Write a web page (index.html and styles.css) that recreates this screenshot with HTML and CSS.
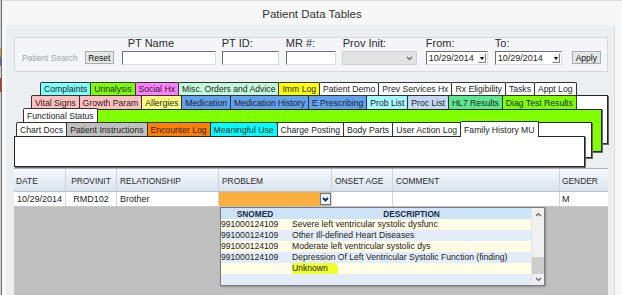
FILE: index.html
```html
<!DOCTYPE html>
<html lang="en">
<head>
    <meta charset="UTF-8">
    <title>Patient Data Tables</title>
    <link rel="stylesheet" href="styles.css">
</head>
<body>
    <div class="desk"></div>

    <div class="janela">
        <div class="titulo">Patient Data Tables</div>

        <div class="painel">
            <!-- barra de busca -->
            <div class="busca">
                <span class="busca-rotulo">Patient Search</span>
                <button class="botao b-reset">Reset</button>
                <div class="campo c-nome"><label>PT Name</label><input type="text"></div>
                <div class="campo c-id"><label>PT ID:</label><input type="text"></div>
                <div class="campo c-mr"><label>MR #:</label><input type="text"></div>
                <div class="campo c-prov">
                    <label>Prov Init:</label>
                    <div class="selecao">
                        <svg width="7" height="5" viewBox="0 0 7 5"><polyline points="1,1 3.5,3.5 6,1" fill="none" stroke="#666" stroke-width="1.2"/></svg>
                    </div>
                </div>
                <div class="campo c-de">
                    <label>From:</label>
                    <div class="data"><span>10/29/2014</span><span class="seta"></span></div>
                </div>
                <div class="campo c-ate">
                    <label>To:</label>
                    <div class="data"><span>10/29/2014</span><span class="seta"></span></div>
                </div>
                <button class="botao b-apply">Apply</button>
            </div>

            <!-- abas empilhadas -->
            <div class="abas">
                <div class="deck deck-a">
                    <div class="fila">
                        <span class="aba ciano">Complaints</span>
                        <span class="aba lima">Urinalysis</span>
                        <span class="aba magenta">Social Hx</span>
                        <span class="aba menta">Misc. Orders and Advice</span>
                        <span class="aba amarelo">Imm Log</span>
                        <span class="aba">Patient Demo</span>
                        <span class="aba">Prev Services Hx</span>
                        <span class="aba">Rx Eligibility</span>
                        <span class="aba">Tasks</span>
                        <span class="aba">Appt Log</span>
                    </div>
                    <div class="folha"></div>
                </div>

                <div class="deck deck-b">
                    <div class="fila">
                        <span class="aba rosa">Vital Signs</span>
                        <span class="aba rosa">Growth Param</span>
                        <span class="aba amarelo-claro">Allergies</span>
                        <span class="aba azul">Medication</span>
                        <span class="aba azul">Medication History</span>
                        <span class="aba azul">E Prescribing</span>
                        <span class="aba ciano-claro">Prob List</span>
                        <span class="aba azul-claro">Proc List</span>
                        <span class="aba verde">HL7 Results</span>
                        <span class="aba lima">Diag Test Results</span>
                    </div>
                    <div class="folha"></div>
                </div>

                <div class="deck deck-c">
                    <div class="fila">
                        <span class="aba">Functional Status</span>
                    </div>
                    <div class="folha"></div>
                </div>

                <div class="deck deck-d">
                    <div class="fila">
                        <span class="aba">Chart Docs</span>
                        <span class="aba cinza">Patient Instructions</span>
                        <span class="aba laranja">Encounter Log</span>
                        <span class="aba agua">Meaningful Use</span>
                        <span class="aba">Charge Posting</span>
                        <span class="aba">Body Parts</span>
                        <span class="aba">User Action Log</span>
                        <span class="aba ativa">Family History MU</span>
                    </div>
                    <div class="folha"></div>
                </div>
            </div>

            <!-- tabela -->
            <div class="grade">
                <div class="cab">
                    <span class="col k-date">DATE</span>
                    <span class="col k-prov centro">PROVINIT</span>
                    <span class="col k-rel">RELATIONSHIP</span>
                    <span class="col k-prob">PROBLEM</span>
                    <span class="col k-onset">ONSET AGE</span>
                    <span class="col k-com">COMMENT</span>
                    <span class="col k-gen">GENDER</span>
                </div>
                <div class="linha">
                    <span class="col k-date centro">10/29/2014</span>
                    <span class="col k-prov centro">RMD102</span>
                    <span class="col k-rel">Brother</span>
                    <span class="col k-prob combo">
                        <span class="combo-botao">
                            <svg width="7" height="5" viewBox="0 0 7 5"><polyline points="1,1 3.5,3.5 6,1" fill="none" stroke="#14254a" stroke-width="1.8"/></svg>
                        </span>
                    </span>
                    <span class="col k-onset"></span>
                    <span class="col k-com"></span>
                    <span class="col k-gen">M</span>
                </div>

                <!-- lista aberta do combo -->
                <div class="lista">
                    <div class="opcoes">
                        <div class="op-cab"><span class="sn">SNOMED</span><span class="ds">DESCRIPTION</span></div>
                        <div class="op"><span class="sn">991000124109</span><span class="ds">Severe left ventricular systolic dysfunc</span></div>
                        <div class="op"><span class="sn">991000124109</span><span class="ds">Other Ill-defined Heart Diseases</span></div>
                        <div class="op"><span class="sn">991000124109</span><span class="ds">Moderate left ventricular systolic dys</span></div>
                        <div class="op"><span class="sn">991000124109</span><span class="ds">Depression Of Left Ventricular Systolic Function (finding)</span></div>
                        <div class="op"><span class="sn"></span><span class="ds"><span class="marca">Unknown</span></span></div>
                        <div class="op"><span class="sn"></span><span class="ds"></span></div>
                    </div>
                    <div class="rolagem">
                        <span class="r-up"><svg width="7" height="5" viewBox="0 0 7 5"><polyline points="1,4 3.5,1.5 6,4" fill="none" stroke="#606060" stroke-width="1.2"/></svg></span>
                        <span class="r-vazio"></span>
                        <span class="r-thumb"></span>
                        <span class="r-down"><svg width="7" height="5" viewBox="0 0 7 5"><polyline points="1,1 3.5,3.5 6,1" fill="none" stroke="#606060" stroke-width="1.2"/></svg></span>
                    </div>
                </div>
            </div>
        </div>
    </div>
</body>
</html>
```

FILE: styles.css
```css
* {
    box-sizing: border-box;
}

body {
    margin: 0;
    width: 622px;
    height: 295px;
    overflow: hidden;
    display: flex;
    background-color: #f7f7f7;
    font-family: "Liberation Sans", Arial, sans-serif;
    font-size: 8.5px;
    color: #1e1e1e;
}

/* pedaco da area de trabalho a esquerda */
.desk {
    width: 3px;
    border-right: 1px solid #6e6e6e;
    background: linear-gradient(to bottom, #cfcfcf 0 48px, #d99a3c 48px 57px, #3f6fbf 57px 66px, #cfcfcf 66px 78px, #d42a1e 78px 92px, #cfcfcf 92px);
}

.janela {
    flex: 1;
    display: flex;
    flex-direction: column;
    border-top: 1px solid #dcdcdc;
}

.titulo {
    height: 24px;
    padding-top: 2px;
    line-height: 22px;
    text-align: center;
    font-size: 11.5px;
    color: #333;
}

.painel {
    flex: 1;
    display: flex;
    flex-direction: column;
    margin: 0 7px 0 4px;
    padding: 12px 6px 0 8px;
    background-color: #eceff2;
    border-right: 1px solid #d6d9dd;
}

/* busca */
.busca {
    height: 35px;
    display: flex;
    align-items: flex-end;
    padding: 0 0 6px 7px;
    border: 1px solid #d4d9df;
    background-color: #f3f5f8;
}

.busca-rotulo {
    line-height: 14px;
    color: #a3a3a3;
}

.botao {
    height: 13px;
    width: 29px;
    margin-bottom: 1px;
    padding: 0;
    font-family: inherit;
    font-size: 8.5px;
    color: #111;
    background-color: #e6e6e6;
    border: 1px solid #acacac;
}

.b-reset { margin-left: 7px; }
.b-apply { margin-left: 10px; }

.campo {
    display: flex;
    flex-direction: column;
}

.campo label {
    font-size: 11px;
    line-height: 13px;
    margin-bottom: 1px;
    color: #2b2b2b;
    white-space: nowrap;
}

.campo input {
    height: 14px;
    width: 100%;
    margin: 0;
    border: 1px solid;
    border-color: #707070 #dcdcdc #dcdcdc #707070;
    background: #fff;
}

.c-nome { margin-left: 8px; width: 94px; }
.c-nome label { padding-left: 6px; }
.c-id { margin-left: 6px; width: 57px; }
.c-mr { margin-left: 7px; width: 50px; }
.c-prov { margin-left: 6px; width: 75px; }
.c-prov label { padding-left: 1px; }
.c-de { margin-left: 9px; width: 62px; }
.c-ate { margin-left: 7px; width: 67px; }

.selecao {
    height: 14px;
    display: flex;
    align-items: center;
    justify-content: flex-end;
    padding-right: 3px;
    background-color: #e3e3e3;
    border: 1px solid #cfcfcf;
}

.data {
    height: 14px;
    display: flex;
    align-items: center;
    justify-content: space-between;
    padding: 0 1px 0 2px;
    font-size: 9px;
    background: #fff;
    border: 1px solid;
    border-color: #707070 #dcdcdc #dcdcdc #707070;
}

.seta {
    width: 8px;
    height: 10px;
    display: flex;
    align-items: center;
    justify-content: center;
    background-color: #f0f0f0;
    border: 1px solid;
    border-color: #fff #808080 #808080 #fff;
}

.seta::after {
    content: "";
    border-left: 2.5px solid transparent;
    border-right: 2.5px solid transparent;
    border-top: 3px solid #000;
}

/* abas */
.abas {
    display: grid;
    margin-top: 10px;
}

.deck {
    grid-area: 1 / 1;
    display: flex;
    flex-direction: column;
    align-items: flex-start;
}

.fila {
    height: 14px;
    display: flex;
    align-items: flex-end;
    padding-left: 2px;
}

.aba {
    height: 100%;
    display: flex;
    align-items: center;
    padding: 0 3px;
    margin-right: -1px;
    font-size: 8.63px;
    white-space: nowrap;
    background-color: #fff;
    border: 1px solid #333;
    border-bottom: 0;
    border-radius: 2px 2px 0 0;
}

.aba.ativa {
    height: 16px;
    margin-bottom: -1px;
    position: relative;
    z-index: 1;
}

.folha {
    background-color: #fff;
    border: 1px solid #262626;
    box-shadow: 1px 1px 0 #6a6a6a;
}

.deck-a { margin: 0 0 0 24px; }
.deck-a .fila { height: 13px; }
.deck-a .folha { width: 570px; height: 49px; }

.deck-b { margin: 13px 0 0 15px; }
.deck-b .folha { width: 573px; height: 43px; background-color: #80ff00; }

.deck-c { margin: 26px 0 0 7px; }
.deck-c .folha { width: 571px; height: 36px; }

.deck-d { margin: 40px 0 0 0; }
.deck-d .folha { width: 571px; height: 31px; }

.ciano { background-color: #80ffff; }
.lima { background-color: #80ff00; }
.magenta { background-color: #ff80ff; }
.menta { background-color: #c4f8da; }
.amarelo { background-color: #ffff00; }
.rosa { background-color: #ffc0c0; }
.amarelo-claro { background-color: #ffff80; }
.azul { background-color: #62a0f0; }
.ciano-claro { background-color: #a6f8ff; }
.azul-claro { background-color: #c4d8f6; }
.verde { background-color: #5ee890; }
.cinza { background-color: #c0c0c0; }
.laranja { background-color: #ff8000; }
.agua { background-color: #00ffff; }

/* tabela */
.grade {
    flex: 1;
    margin-top: 1px;
    position: relative;
    background-color: #c0c0c0;
}

.cab {
    height: 24px;
    display: flex;
    border-top: 1px solid #aab4bf;
    background: linear-gradient(#f5f8fc, #dae3ee);
    border-bottom: 1px solid #b8c2cc;
    font-size: 8.4px;
    color: #2a2a2a;
}

.cab .col {
    padding-top: 2px;
    border-right: 1px solid #c9d2dc;
}

.linha {
    height: 15px;
    display: flex;
    background-color: #fff;
    border-bottom: 1px solid #c8c8c8;
    font-size: 9px;
}

.linha .col {
    border-right: 1px solid #d6d6d6;
}

.col {
    display: flex;
    align-items: center;
    padding-left: 3px;
    white-space: nowrap;
}

.col.centro {
    justify-content: center;
    padding-left: 0;
}

.k-date { width: 52px; }
.cab .k-date { padding-left: 2px; }
.k-prov { width: 51px; }
.k-rel { width: 102px; }
.k-prob { width: 113px; }
.k-onset { width: 61px; }
.k-com { width: 167px; }
.k-gen { width: 48px; border-right: 0 !important; padding-left: 2px; }

.combo {
    justify-content: flex-end;
    padding: 0;
    background-color: #fab040;
}

.combo-botao {
    width: 11px;
    height: 12px;
    display: flex;
    align-items: center;
    justify-content: center;
    background-color: #eef4fb;
    border: 1px solid #4a7fbf;
}

/* lista do combo */
.lista {
    position: absolute;
    left: 206px;
    top: 39px;
    width: 325px;
    display: flex;
    background-color: #fff;
    border: 1px solid #7a7a7a;
    box-shadow: 1px 1px 2px rgba(0, 0, 0, 0.25);
}

.opcoes {
    flex: 1;
    display: flex;
    flex-direction: column;
}

.op-cab {
    height: 11px;
    display: flex;
    align-items: center;
    background-color: #cde3f8;
    font-weight: bold;
    font-size: 8.3px;
    color: #1b2a47;
}

.op-cab .sn,
.op-cab .ds {
    text-align: center;
}

.op {
    height: 11px;
    line-height: 11px;
    display: flex;
    font-size: 8.6px;
    color: #222;
    white-space: nowrap;
}

.op:nth-child(even) { background-color: #fffde6; }
.op:nth-child(odd) { background-color: #e2edf9; }

.sn { width: 68px; }
.ds { flex: 1; padding-left: 3px; }

.marca {
    padding: 0 10px 4px 0;
    background-color: #eeff2e;
    border-radius: 0 5px 5px 0;
}

.rolagem {
    width: 13px;
    display: flex;
    flex-direction: column;
    background-color: #f0f0f0;
    border-left: 1px solid #e2e2e2;
}

.r-up,
.r-down {
    display: flex;
    align-items: center;
    justify-content: center;
}

.r-up { height: 12px; }
.r-down { height: 11px; }
.r-vazio { flex: 1; }

.r-thumb {
    height: 17px;
    background-color: #cdcdcd;
}
```
